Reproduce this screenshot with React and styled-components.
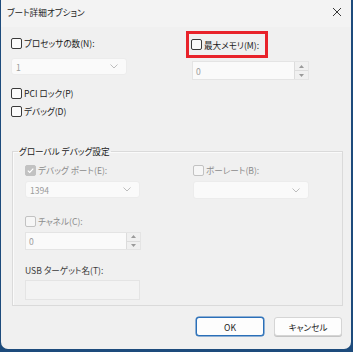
import React from "react";
import styled, { createGlobalStyle } from "styled-components";

const GlobalStyle = createGlobalStyle`
  html, body {
    margin: 0;
    padding: 0;
    background: #1d4b7c;
  }
  body {
    width: 353px;
    height: 352px;
    overflow: hidden;
    font-family: "Noto Sans CJK JP", "Noto Sans", sans-serif;
    font-size: 8.6px;
    font-feature-settings: "palt";
    color: #1b1b1b;
  }
`;

function CheckBox({ checked, disabled }) {
  return (
    <Box $checked={checked} $disabled={disabled}>
      {checked && (
        <svg width="9" height="9" viewBox="0 0 9 9">
          <path d="M1.8 4.6 L3.7 6.4 L7.3 2.6" fill="none" stroke="#fff" strokeWidth="1.2" />
        </svg>
      )}
    </Box>
  );
}

function Check({ label, checked, disabled }) {
  return (
    <CheckRow>
      <CheckBox checked={checked} disabled={disabled} />
      <Label $disabled={disabled}>{label}</Label>
    </CheckRow>
  );
}

function Select({ value, width, height }) {
  return (
    <SelectBox $width={width} $height={height}>
      <span>{value}</span>
      <svg width="8" height="5" viewBox="0 0 8 5">
        <path d="M0.5 0.5 L4 4 L7.5 0.5" fill="none" stroke="#b5b5b5" strokeWidth="0.9" />
      </svg>
    </SelectBox>
  );
}

function Spin({ value, width, height }) {
  return (
    <SpinBox $width={width} $height={height}>
      <SpinValue>{value}</SpinValue>
      <SpinButtons>
        <SpinBtn>
          <svg width="5" height="3" viewBox="0 0 5 3">
            <path d="M0 3 L2.5 0 L5 3 Z" fill="#9a9a9a" />
          </svg>
        </SpinBtn>
        <SpinBtn>
          <svg width="5" height="3" viewBox="0 0 5 3">
            <path d="M0 0 L2.5 3 L5 0 Z" fill="#9a9a9a" />
          </svg>
        </SpinBtn>
      </SpinButtons>
    </SpinBox>
  );
}

export default function App() {
  return (
    <>
      <GlobalStyle />
      <Window>
        <TitleBar>
          <Title>ブート詳細オプション</Title>
          <Close>
            <svg width="10" height="10" viewBox="0 0 10 10">
              <path d="M1 1 L9 9 M9 1 L1 9" stroke="#222" strokeWidth="0.9" />
            </svg>
          </Close>
        </TitleBar>
        <Body>
          <TopGrid>
            <Column>
              <CheckLine>
                <Check label="プロセッサの数(N):" />
              </CheckLine>
              <Select value="1" width={116} height={17} />
            </Column>
            <Column>
              <Highlight>
                <Check label="最大メモリ(M):" />
              </Highlight>
              <Indent>
                <Spin value="0" width={117} height={19} />
              </Indent>
            </Column>
          </TopGrid>
          <Options>
            <Check label="PCI ロック(P)" />
            <Check label="デバッグ(D)" />
          </Options>
          <Group>
            <Legend>グローバル デバッグ設定</Legend>
            <GroupGrid>
              <GroupColumn>
                <Check label="デバッグ ポート(E):" checked disabled />
                <Select value="1394" width={115} height={17} />
              </GroupColumn>
              <GroupColumn>
                <Check label="ボーレート(B):" disabled />
                <Select value="" width={116} height={18} />
              </GroupColumn>
            </GroupGrid>
            <Field $top={16}>
              <Check label="チャネル(C):" disabled />
              <Spin value="0" width={116} height={18} />
            </Field>
            <Field $top={14} $gap={4}>
              <PlainLabel>USB ターゲット名(T):</PlainLabel>
              <TextBox />
            </Field>
          </Group>
          <Buttons>
            <Button $primary>OK</Button>
            <Button>キャンセル</Button>
          </Buttons>
        </Body>
      </Window>
    </>
  );
}

const Window = styled.div`
  margin-left: 1px;
  width: 350px;
  height: 349px;
  background: #f0f0f0;
  border-radius: 0 0 7px 7px;
  display: flex;
  flex-direction: column;
  overflow: hidden;
`;

const TitleBar = styled.div`
  height: 27px;
  flex: none;
  background: #f3f3f3;
  display: flex;
  align-items: center;
  justify-content: space-between;
  padding: 0 8px 3px 6px;
  box-sizing: border-box;
`;

const Title = styled.div`
  color: #1b1b1b;
`;

const Close = styled.div`
  display: flex;
  align-items: center;
  padding-right: 1px;
`;

const Body = styled.div`
  flex: 1;
  display: flex;
  flex-direction: column;
  padding: 4px 9px 0 10px;
`;

const TopGrid = styled.div`
  display: grid;
  grid-template-columns: 175px 1fr;
`;

const Column = styled.div`
  display: flex;
  flex-direction: column;
  gap: 6px;
`;

const GroupColumn = styled.div`
  display: flex;
  flex-direction: column;
  gap: 5px;
`;

const CheckLine = styled.div`
  height: 21px;
  display: flex;
  align-items: flex-end;
  padding-bottom: 3px;
  box-sizing: border-box;
`;

const Highlight = styled.div`
  width: 82px;
  height: 27px;
  border: 3px solid #e8222a;
  box-sizing: border-box;
  display: flex;
  align-items: center;
  padding-left: 2px;
  margin-bottom: -3px;
`;

const Indent = styled.div`
  padding-left: 6px;
`;

const CheckRow = styled.div`
  display: flex;
  align-items: center;
  gap: 2px;
  height: 12px;
`;

const Box = styled.div`
  width: 9px;
  height: 9px;
  border: 1px solid ${(p) => (p.$disabled ? "#c2c2c2" : "#3a3a3a")};
  background: ${(p) => (p.$checked ? "#c2c2c2" : p.$disabled ? "#f6f6f6" : "#fbfbfb")};
  border-radius: 2px;
  display: flex;
  align-items: center;
  justify-content: center;
  flex: none;
`;

const Label = styled.span`
  color: ${(p) => (p.$disabled ? "#8c8c8c" : "#1b1b1b")};
  white-space: nowrap;
  line-height: 12px;
`;

const PlainLabel = styled.div`
  color: #3c3c3c;
  line-height: 12px;
  height: 12px;
`;

const SelectBox = styled.div`
  width: ${(p) => p.$width}px;
  height: ${(p) => p.$height}px;
  box-sizing: border-box;
  background: #fafafa;
  border: 1px solid #ececec;
  border-radius: 3px;
  display: flex;
  align-items: center;
  justify-content: space-between;
  padding: 0 8px 0 4px;
  color: #9c9c9c;
`;

const SpinBox = styled.div`
  width: ${(p) => p.$width}px;
  height: ${(p) => p.$height}px;
  box-sizing: border-box;
  background: #fafafa;
  border: 1px solid #e4e4e4;
  display: flex;
  align-items: stretch;
  color: #9c9c9c;
`;

const SpinValue = styled.div`
  flex: 1;
  display: flex;
  align-items: center;
  padding-left: 3px;
`;

const SpinButtons = styled.div`
  width: 13px;
  display: flex;
  flex-direction: column;
  border-left: 1px solid #dcdcdc;
  background: #f0f0f0;
`;

const SpinBtn = styled.div`
  flex: 1;
  display: flex;
  align-items: center;
  justify-content: center;
  & + & {
    border-top: 1px solid #dcdcdc;
  }
`;

const Options = styled.div`
  display: flex;
  flex-direction: column;
  gap: 6px;
  margin-top: 7px;
`;

const Group = styled.fieldset`
  margin: 28px 0 0 1px;
  width: 331px;
  height: 161px;
  box-sizing: border-box;
  border: 1px solid #dadada;
  box-shadow: inset 1px 1px 0 #fafafa;
  padding: 7px 12px 0 12px;
  display: flex;
  flex-direction: column;
`;

const Legend = styled.legend`
  padding: 0 1px;
  margin-left: -7px;
  color: #1b1b1b;
  line-height: 12px;
`;

const GroupGrid = styled.div`
  display: grid;
  grid-template-columns: 168px 1fr;
`;

const Field = styled.div`
  display: flex;
  flex-direction: column;
  gap: ${(p) => p.$gap ?? 5}px;
  margin-top: ${(p) => p.$top}px;
`;

const TextBox = styled.div`
  width: 115px;
  height: 20px;
  box-sizing: border-box;
  background: #f3f3f3;
  border: 1px solid #e4e4e4;
`;

const Buttons = styled.div`
  display: flex;
  justify-content: flex-end;
  gap: 10px;
  margin-top: 11px;
`;

const Button = styled.div`
  width: 68px;
  height: 19px;
  box-sizing: border-box;
  background: #fdfdfd;
  border: 1px solid ${(p) => (p.$primary ? "#2a6fb8" : "#d5d5d5")};
  box-shadow: ${(p) => (p.$primary ? "0 0 0 0.5px #2a6fb8" : "0 1px 0 #c4c4c4")};
  border-radius: 3px;
  display: flex;
  align-items: center;
  justify-content: center;
  color: #1b1b1b;
`;
